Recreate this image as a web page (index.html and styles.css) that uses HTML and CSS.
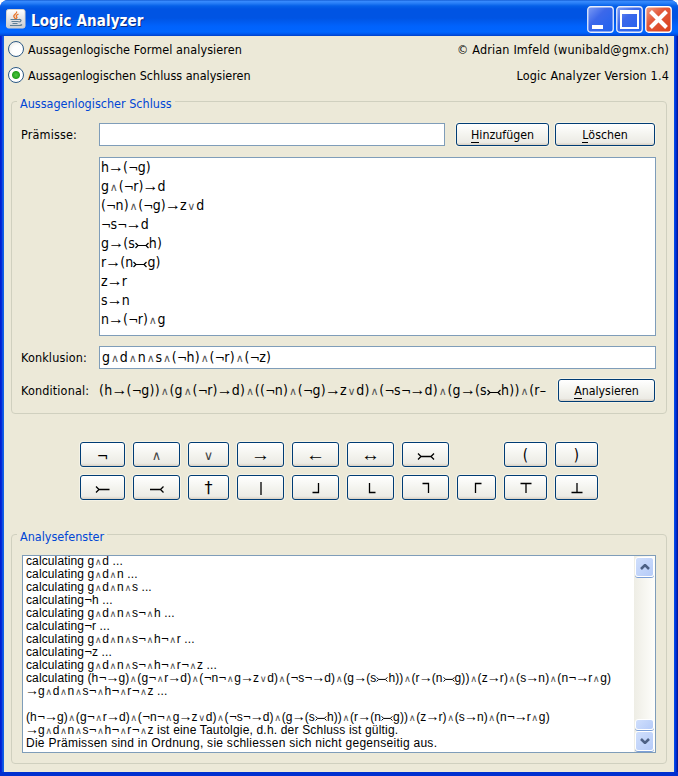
FILE: index.html
```html
<!DOCTYPE html>
<html lang="de">
<head>
<meta charset="utf-8">
<title>Logic Analyzer</title>
<link rel="stylesheet" href="styles.css">
</head>
<body>
<div class="window">
  <header class="titlebar">
    <svg class="app-icon" width="20" height="20" viewBox="0 0 20 20">
      <defs><linearGradient id="ig" x1="0" y1="0" x2="0" y2="1"><stop offset="0" stop-color="#fff"/><stop offset="1" stop-color="#c9ccd2"/></linearGradient></defs>
      <rect x=".5" y=".5" width="18.500" height="18.500" rx="2" fill="url(#ig)" stroke="#d8d4cc"/>
      <path d="M10.500 2.500c1.500 2-4 3-2.500 5.500l1.500 2M12.500 5c-3 1.500-2.500 2-1.500 3.500l-1 1.500" fill="none" stroke="#e8762c" stroke-width="1.300"/>
      <path d="M4.500 10.500h8.500M5.500 12.500h7M6.500 14.500h5M13 10.500c3-.5 2.500 2.500-.5 2.500M4 16.500h9.500c1.500 0 2-.5 2.500-1" fill="none" stroke="#5f7f96" stroke-width="1.200"/>
    </svg>
    <h1 class="title">Logic Analyzer</h1>
    <div class="controls">
      <svg width="27" height="27" viewBox="0 0 27 27"><defs><linearGradient id="bl" x1="0" y1="0" x2="1" y2="1"><stop offset="0" stop-color="#7f9df5"/><stop offset=".4" stop-color="#3c68ea"/><stop offset="1" stop-color="#1e62f0"/></linearGradient></defs><rect x=".75" y=".75" width="25.500" height="25.500" rx="3" fill="url(#bl)" stroke="#e8eefc" stroke-width="1.300"/><path d="M5 19h11v4H5z" fill="#fff"/></svg>
      <svg width="27" height="27" viewBox="0 0 27 27"><rect x=".75" y=".75" width="25.500" height="25.500" rx="3" fill="url(#bl)" stroke="#e8eefc" stroke-width="1.300"/><path d="M4 4h19v19H4zM6 8v13h15V8z" fill="#fff" fill-rule="evenodd"/></svg>
      <svg width="27" height="27" viewBox="0 0 27 27"><defs><linearGradient id="rd" x1="0" y1="0" x2="1" y2="1"><stop offset="0" stop-color="#f0a088"/><stop offset=".4" stop-color="#e2583a"/><stop offset="1" stop-color="#d8401a"/></linearGradient></defs><rect x=".75" y=".75" width="25.500" height="25.500" rx="3" fill="url(#rd)" stroke="#fff" stroke-width="1.300"/><path d="M5.500 5.500l16 16M21.500 5.500l-16 16" stroke="#fff" stroke-width="4"/></svg>
    </div>
  </header>
  <main class="content">
    <div class="options">
      <div class="option"><span class="radio"></span><span class="choice">Aussagenlogische Formel analysieren</span><span class="right">© Adrian Imfeld (wunibald@gmx.ch)</span></div>
      <div class="option"><span class="radio on"></span><span>Aussagenlogischen Schluss analysieren</span><span class="right">Logic Analyzer Version 1.4</span></div>
    </div>

    <section class="group input-group">
      <h2 class="legend">Aussagenlogischer Schluss</h2>
      <div class="row">
        <span class="label">Prämisse:</span>
        <div class="field premise"></div>
        <button class="btn add"><u>H</u>inzufügen</button>
        <button class="btn del"><u>L</u>öschen</button>
      </div>
      <div class="list">
        <div class="formula">h→(¬g)</div>
        <div class="formula">g∧(¬r)→d</div>
        <div class="formula">(¬n)∧(¬g)→z∨d</div>
        <div class="formula">¬s¬→d</div>
        <div class="formula">g→(s⤚⤙h)</div>
        <div class="formula">r→(n⤚⤙g)</div>
        <div class="formula">z→r</div>
        <div class="formula">s→n</div>
        <div class="formula">n→(¬r)∧g</div>
      </div>
      <div class="row conclusion">
        <span class="label">Konklusion:</span>
        <div class="field formula">g∧d∧n∧s∧(¬h)∧(¬r)∧(¬z)</div>
      </div>
      <div class="row conditional">
        <span class="label">Konditional:</span>
        <div class="formula preview">(h→(¬g))∧(g∧(¬r)→d)∧((¬n)∧(¬g)→z∨d)∧(¬s¬→d)∧(g→(s⤚⤙h))∧(r–</div>
        <button class="btn run"><u>A</u>nalysieren</button>
      </div>
    </section>

    <div class="keys">
      <button class="btn"><span class="sym neg">¬</span></button>
      <button class="btn"><span class="sym vee">∧</span></button>
      <button class="btn"><span class="sym vee">∨</span></button>
      <button class="btn"><span class="sym arrow">→</span></button>
      <button class="btn"><span class="sym arrow">←</span></button>
      <button class="btn"><span class="sym arrow">↔</span></button>
      <button class="btn"><svg class="key" viewBox="0 0 20 20"><path d="M5 11.500h10M2 8.500l3 3-3 3M18 8.500l-3 3 3 3"/></svg></button>
      <span></span>
      <button class="btn paren">(</button>
      <button class="btn paren">)</button>
      <button class="btn"><svg class="key" viewBox="0 0 20 20"><path d="M6 11.500h10.500M3 8.500l3 3-3 3"/></svg></button>
      <button class="btn"><svg class="key" viewBox="0 0 20 20"><path d="M3 11.500h10.500M16.500 8.500l-3 3 3 3"/></svg></button>
      <button class="btn"><span class="sym dagger">†</span></button>
      <button class="btn"><svg class="key" viewBox="0 0 20 20"><path d="M10 4v13"/></svg></button>
      <button class="btn"><svg class="key" viewBox="0 0 20 20"><path d="M12.500 5v9.500H6.500"/></svg></button>
      <button class="btn"><svg class="key" viewBox="0 0 20 20"><path d="M8.500 5v9.500H14.500"/></svg></button>
      <button class="btn"><svg class="key" viewBox="0 0 20 20"><path d="M6.500 5.500h6V15"/></svg></button>
      <button class="btn"><svg class="key" viewBox="0 0 20 20"><path d="M14.500 5.500h-6V15"/></svg></button>
      <button class="btn"><svg class="key" viewBox="0 0 20 20"><path d="M4.500 5.500h11M10 5.500V15"/></svg></button>
      <button class="btn"><svg class="key" viewBox="0 0 20 20"><path d="M4.500 14.500h11M10 5v9.500"/></svg></button>
    </div>

    <section class="group output-group">
      <h2 class="legend">Analysefenster</h2>
      <div class="output">
        <div class="log">
          <div class="line">calculating g∧d ...</div>
          <div class="line">calculating g∧d∧n ...</div>
          <div class="line">calculating g∧d∧n∧s ...</div>
          <div class="line">calculating¬h ...</div>
          <div class="line">calculating g∧d∧n∧s¬∧h ...</div>
          <div class="line">calculating¬r ...</div>
          <div class="line">calculating g∧d∧n∧s¬∧h¬∧r ...</div>
          <div class="line">calculating¬z ...</div>
          <div class="line">calculating g∧d∧n∧s¬∧h¬∧r¬∧z ...</div>
          <div class="line">calculating (h¬→g)∧(g¬∧r→d)∧(¬n¬∧g→z∨d)∧(¬s¬→d)∧(g→(s⤚⤙h))∧(r→(n⤚⤙g))∧(z→r)∧(s→n)∧(n¬→r∧g)</div>
          <div class="line">→g∧d∧n∧s¬∧h¬∧r¬∧z ...</div>
          <div class="line"></div>
          <div class="line">(h¬→g)∧(g¬∧r→d)∧(¬n¬∧g→z∨d)∧(¬s¬→d)∧(g→(s⤚⤙h))∧(r→(n⤚⤙g))∧(z→r)∧(s→n)∧(n¬→r∧g)</div>
          <div class="line">→g∧d∧n∧s¬∧h¬∧r¬∧z<span class="verdict"> ist eine Tautolgie, d.h. der Schluss ist gültig.</span></div>
          <div class="line"><span class="words">Die Prämissen sind in Ordnung, sie schliessen sich nicht gegenseitig aus.</span></div>
        </div>
        <div class="scrollbar">
          <div class="sb-btn"><svg width="10" height="6" viewBox="0 0 10 6"><path d="M1 5l4-4 4 4"/></svg></div>
          <div class="sb-track"></div>
          <div class="sb-thumb"></div>
          <div class="sb-btn"><svg width="10" height="6" viewBox="0 0 10 6"><path d="M1 1l4 4 4-4"/></svg></div>
        </div>
      </div>
    </section>
  </main>
</div>
<script src="script.js"></script>
</body>
</html>
```
FILE: styles.css
```css
* { box-sizing: border-box; }
body { margin: 0; background: #fff; font-family: "DejaVu Sans Condensed", "DejaVu Sans", sans-serif; font-stretch: condensed; font-size: 12.5px; color: #000; }
.window { width: 678px; height: 776px; border-radius: 8px 8px 0 0; overflow: hidden; background: linear-gradient(90deg, #0019cf 0, #0831d9 2px, #166aee 3px, #0855dd 4px, #0855dd 674px, #0040e8 675px, #0030d8 676px, #00138c 678px); display: flex; flex-direction: column; box-shadow: inset 0 -4px 0 #0030d0; }
.titlebar { height: 36px; flex: none; display: flex; align-items: center; padding: 3px 6px 0 6px; background: linear-gradient(180deg, #0950c8 0, #3a8cff 1px, #2a80f8 3px, #0560e8 6px, #0054e3 9px, #0054e3 18px, #0062fc 26px, #0066ff 32px, #0058ee 34px, #0040c8 36px); }
.app-icon { margin-top: -1px; }
.title { margin: 2px 0 0 5px; color: #fff; font-size: 15px; letter-spacing: .1px; line-height: 20px; font-weight: bold; text-shadow: 1px 1px 0 #0a2a80; white-space: nowrap; }
.controls { margin-left: auto; display: flex; gap: 2px; }
.controls svg { display: block; }
.content { flex: 1; margin: 0 4px 4px; background: #ece9d8; }
.options { padding: 0 5px 0 4px; }
.option { height: 26px; display: flex; align-items: center; white-space: nowrap; }
.choice { letter-spacing: .07px; }
.radio { width: 16px; height: 16px; margin-right: 4px; border: 1.5px solid #2d5a86; border-radius: 50%; background: radial-gradient(circle at 60% 60%, #fff 40%, #e4e3dc); }
.radio.on { background: radial-gradient(circle, #4cc840 0, #25a11e 3.5px, #fff 4.5px); }
.right { margin-left: auto; letter-spacing: .17px; }
.group { margin: 0 7px; border: 1px solid #d0d0bf; border-radius: 4px; }
.legend { margin: -8px 0 0 5px; padding: 0 3px; width: max-content; height: 20px; line-height: 20px; font-size: 12.5px; font-weight: normal; color: #0046d5; background: #ece9d8; }
.input-group { margin-top: 13px; height: 313px; }
.row { display: flex; padding-left: 9px; }
.input-group .legend + .row { margin-top: 9px; }
.label { width: 78px; flex: none; line-height: 23px; letter-spacing: .15px; }
.field { border: 1px solid #7f9db9; background: #fff; height: 23px; }
.premise { width: 346px; margin-right: 11px; }
.btn { height: 23px; padding: 0; border: 1px solid #003c74; border-radius: 3px; background: linear-gradient(180deg, #fff 0, #f4f4ef 50%, #ecebe5 88%, #d8d0c4 100%); box-shadow: 0 0 0 1px rgba(250,248,240,.6); font: inherit; font-size: 12.3px; color: #000; line-height: 20px; }
.btn u { text-decoration: none; border-bottom: 1px solid #000; display: inline-block; line-height: 13px; }
.add { width: 93px; margin-right: 6px; }
.del { width: 100px; }
.list { width: 557px; height: 179px; margin: 11px 0 0 87px; border: 1px solid #7f9db9; background: #fff; padding: 0 0 0 1px; }
.formula { font-size: 14px; line-height: 19px; letter-spacing: .12px; white-space: nowrap; }
.conclusion { margin-top: 10px; }
.conclusion .field { width: 557px; padding-left: 2px; line-height: 20px; letter-spacing: .3px; }
.conditional { margin-top: 10px; }
.preview { width: 449px; line-height: 22px; margin-right: 10px; letter-spacing: .29px; }
.run { width: 97px; }
.keys { display: grid; grid-template-columns: 45px 47px 41px 47px 47px 47px 47px 39px 43px 43px; grid-auto-rows: 25px; gap: 8px; padding: 28px 0 0 76px; }
.keys .btn { height: 25px; display: flex; align-items: center; justify-content: center; }
.key { width: 20px; height: 20px; fill: none; stroke: #000; stroke-width: 1.3; }
.sym { font-family: "DejaVu Sans", sans-serif; font-stretch: normal; }
.sym.neg { font-size: 14px; padding-top: 2px; }
.sym.vee { font-size: 13px; padding-top: 2px; color: #444; }
.sym.arrow { font-family: "Liberation Sans", sans-serif; font-size: 19px; }
.sym.dagger { font-size: 16px; }
.paren { font-size: 15px; }
.output-group { margin-top: 34px; height: 230px; }
.output { margin: 8px 0 0 10px; width: 634px; height: 198px; display: flex; background: #fff; border: 1px solid #7f9db9; }
.log { flex: 1; min-width: 0; padding-left: 3px; overflow: hidden; font: 12px/13px "Liberation Sans", sans-serif; letter-spacing: .12px; }
.line { height: 13px; white-space: pre; position: relative; top: -1px; }
.words { letter-spacing: .27px; }
.verdict { letter-spacing: .18px; }
.op { display: inline-block; font-family: "DejaVu Sans", sans-serif; font-stretch: normal; letter-spacing: 0; line-height: 10px; text-align: center; white-space: nowrap; }
.op-arrow { width: 14px; font-family: "Liberation Sans", sans-serif; font-size: 16px; text-indent: -1px; }
.op-neg { width: 9.5px; font-size: 12px; }
.op-vee { width: 9.5px; font-size: 11px; color: #555; }
.op-xor { width: 14px; height: 12px; vertical-align: -3px; }
.line .op-arrow { width: 12px; font-size: 14px; line-height: 8px; }
.line .op-neg { width: 8px; font-size: 10px; }
.line .op-vee { width: 8px; font-size: 9.5px; }
.line .op-xor { width: 12px; height: 10px; vertical-align: -2px; }
.op svg { display: block; width: 100%; height: 100%; fill: none; stroke: #000; stroke-width: 1.2; }
.scrollbar { width: 21px; padding: 1px; display: flex; flex-direction: column; background: linear-gradient(90deg, #eeede5, #fefefb); }
.sb-btn, .sb-thumb { border: 1px solid #fff; border-radius: 3px; background: linear-gradient(135deg, #d0dffc, #b5cbf8); box-shadow: 0 1px 0 #7b9fd8; }
.sb-btn { height: 20px; display: flex; align-items: center; justify-content: center; }
.sb-btn svg { fill: none; stroke: #4d6185; stroke-width: 2.5; }
.sb-track { flex: 1; }
.sb-thumb { height: 11px; margin-bottom: 1px; }
```
FILE: script.js
```js
// Gives every connective in a formula a cell of constant width.
const KIND = { '→': 'arrow', '¬': 'neg', '∧': 'vee', '∨': 'vee' };
const XOR = '<svg viewBox="0 0 14 12"><path d="M3 6.500h8M.5 4l2.500 2.500L.5 9M13.500 4L11 6.500 13.500 9"/></svg>';
for (const el of document.querySelectorAll('.formula, .line')) {
  el.innerHTML = el.innerHTML.replace(/⤚⤙|[→¬∧∨]/g, s =>
    KIND[s] ? `<span class="op op-${KIND[s]}">${s}</span>` : `<span class="op op-xor">${XOR}</span>`);
}
```
